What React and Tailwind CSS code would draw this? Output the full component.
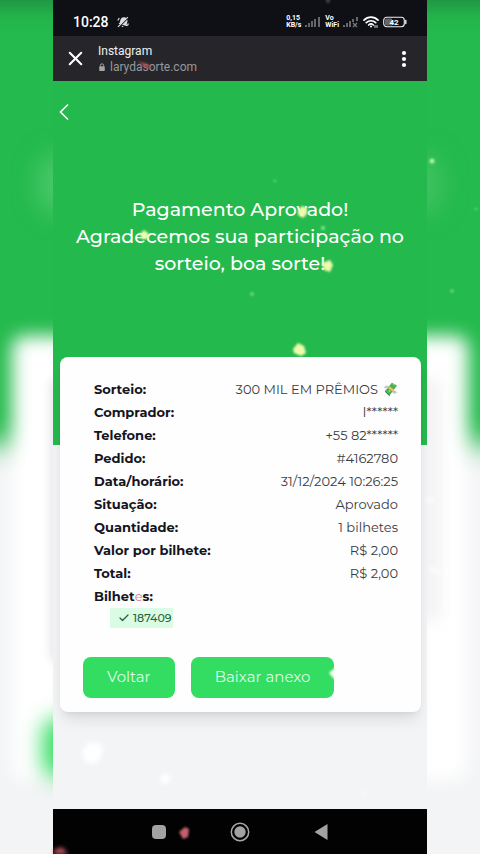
import { X, Check } from "lucide-react";

const details = [
  ["Comprador:", "l******"],
  ["Telefone:", "+55 82******"],
  ["Pedido:", "#4162780"],
  ["Data/horário:", "31/12/2024 10:26:25"],
  ["Situação:", "Aprovado"],
  ["Quantidade:", "1 bilhetes"],
  ["Valor por bilhete:", "R$ 2,00"],
  ["Total:", "R$ 2,00"],
];

function Muted() {
  return (
    <svg viewBox="0 0 12 12" className="size-3" aria-hidden="true">
      <path d="M6.5 1.2c2.700 0 4.500 2 3.900 4.400L9.700 8.300l.6 1.900L1.500 7.800l1.300-1.400.6-2.300C3.900 2.200 5 1.200 6.500 1.200z" fill="#dcdcde" />
      <path d="M4.200 9.500l2.600.7-1.500 1z" fill="#dcdcde" />
      <path d="M.8 4.500l1.500-2.500M11.400 7.500l-1 2.300" stroke="#dcdcde" strokeWidth="1.200" />
      <path d="M2 11L11.400 1.600" stroke="#0f0f16" strokeWidth="1.200" />
      <path d="M1 10.900L10.800 1.100" stroke="#dcdcde" strokeWidth="1.200" />
    </svg>
  );
}

function Signal({ off }) {
  return (
    <svg viewBox="0 0 16 12" className="h-3 w-4" fill="#66666b" aria-hidden="true">
      <rect x="0" y="9" width="2" height="2" />
      <rect x="3" y="7" width="2" height="4" />
      <rect x="6" y="5" width="2" height="6" />
      <rect x="9" y="3" width="2" height={off ? 3 : 8} />
      <rect x="13" y="1" width="2" height={off ? 4 : 10} />
      {off && <path d="M10 7l4 4M14 7l-4 4" stroke="#77777c" strokeWidth="1.3" />}
    </svg>
  );
}

function Wifi() {
  return (
    <svg viewBox="0 0 16 12" className="h-3 w-4" fill="none" stroke="#fff" strokeWidth="1.7" strokeLinecap="round" aria-hidden="true">
      <path d="M1 4.2C5 0.200 11 0.200 15 4.200M3.300 6.700c2.700-2.600 6.700-2.600 9.400 0M5.700 9c1.300-1.200 3.300-1.200 4.600 0" />
      <circle cx="8" cy="10.600" r="1" fill="#fff" stroke="none" />
      <path d="M12 9.500v2M14 9.500v2" strokeWidth="0.900" />
    </svg>
  );
}

function Battery() {
  return (
    <svg viewBox="0 0 24 12" className="h-3 w-6" aria-label="42%">
      <rect x="0.7" y="1.2" width="20.6" height="9.6" rx="3" fill="none" stroke="#ededed" strokeWidth="1.1" />
      <path d="M3.5 2.5H9v7H3.5A1.5 1.5 0 0 1 2 8V4a1.5 1.5 0 0 1 1.5-1.5z" fill="#67676b" />
      <path d="M22.8 4.5v3" stroke="#ededed" strokeWidth="1.4" strokeLinecap="round" />
      <text x="11" y="9" textAnchor="middle" fontSize="8" fontWeight="700" fill="#fff" className="font-[Roboto,sans-serif]">42</text>
    </svg>
  );
}

function FlyingMoney() {
  return (
    <svg viewBox="0 0 16 16" className="size-[15px]" aria-label="dinheiro">
      <path d="M0.500 6L3 3.600l3.500.6L5 7 2.500 6.600zM2 8l3-.2-.5 2.200-2 .2z" fill="#c6ccd2" />
      <path d="M10 9l3 .4 2.800 2-2.900-.3.800 2-3.500-1.700z" fill="#b9c1c8" />
      <path d="M9.400 0.800l5.600 3-7.400 9.800-4.900-4.400z" fill="#4fae54" />
      <path d="M2.700 9.200l4.900 4.400-.7 1.500-4.900-4.600z" fill="#2f8a43" />
      <path d="M6.900 4.400l5 3.800-1.500 2L5.300 6.600z" fill="#f0c34a" />
      <path d="M10.300 2.300l2.600 1.400" stroke="#9bdc92" strokeWidth="0.9" />
      <circle cx="7" cy="9.600" r="1" fill="#9bdc92" />
    </svg>
  );
}

function Backdrop() {
  return (
    <div className="absolute inset-0 -z-10 overflow-hidden bg-[#f3f4f6]" aria-hidden="true">
      <div className="absolute -inset-x-10 -top-10 h-[484px] bg-[#24ba4d] blur-[14px]" />
      <div className="absolute -inset-x-10 -top-6 h-7 bg-[#20823f] blur-md" />
      <div className="absolute top-[154px] left-[38px] h-[60px] w-10 rounded-full bg-[#4ac86a] blur-md" />
      <div className="absolute top-[154px] right-[38px] h-[60px] w-10 rounded-full bg-[#40c262] blur-md" />
      <div className="absolute inset-x-[12px] top-[336px] h-[444px] rounded-xl bg-white blur-[9px]" />
      <div className="absolute top-[380px] right-[41px] h-[240px] w-4 bg-[#f0eff1] blur-[8px]" />
      <div className="absolute top-[380px] left-[50px] h-[280px] w-2 bg-[#e6e6e9] blur-[4px]" />
      <div className="absolute top-[718px] left-[43px] h-[60px] w-12 rounded-2xl bg-[#30dd60] blur-[11px]" />
    </div>
  );
}

function Confetti() {
  return (
    <svg className="pointer-events-none absolute top-0 left-1/2 h-[854px] w-[480px] -translate-x-1/2" viewBox="0 0 480 854" aria-hidden="true">
      <defs>
        <filter id="soft" x="-50%" y="-50%" width="200%" height="200%">
          <feGaussianBlur stdDeviation="0.8" />
        </filter>
        <filter id="softer" x="-50%" y="-50%" width="200%" height="200%">
          <feGaussianBlur stdDeviation="2" />
        </filter>
      </defs>
      <g filter="url(#soft)" fill="#ecfbaa">
        <path d="M298 210l4-4 5 2 0 6-4 4-5-3z" />
        <path d="M140 234l4-4 5 4-1 5-6 0z" />
        <path d="M322 263l8-3 3 5-3 7-6-2z" />
        <path d="M293 349l5-6 6 3 2 7-5 3-7-3z" />
        <circle cx="323" cy="228" r="2" fill="#83e795" />
        <circle cx="275" cy="181" r="1.4" fill="#5bd078" />
        <circle cx="252" cy="294" r="1.7" fill="#7be391" />
        <circle cx="432" cy="161" r="2.5" fill="#b5f59f" />
        <circle cx="476" cy="209" r="1.5" fill="#59d276" />
        <circle cx="452" cy="291" r="1.7" fill="#70dc89" />
        <path d="M329 673l7-6v14z" fill="#fbfff0" />
        <path d="M138 62l7 1 8 4-7 1z" fill="#a94a52" />
        <path d="M179 832l6-5 4 2-1 8-5 2z" fill="#c3616b" />
        <circle cx="328" cy="1" r="2" fill="#48484d" />
      </g>
      <g filter="url(#softer)" fill="#fff">
        <path d="M82 751l8-9 11 2 2 10-8 10-10-2z" />
        <circle cx="165" cy="779" r="5" />
        <circle cx="364" cy="794" r="2" />
        <path d="M426 499l8-1v4l-8 0z" />
        <path d="M429 567l11 4-2 3-9-4z" />
        <path d="M54 850l8-3 6 7H54z" fill="#b8505b" />
      </g>
    </svg>
  );
}

export default function App() {
  return (
    <div className="relative isolate min-h-screen px-[53px] font-[Montserrat,Inter,sans-serif]">
      <Backdrop />
      <div className="flex min-h-screen flex-col bg-[#f3f4f6]">
        <div className="flex h-9 items-center justify-between bg-[#0f0f16] px-5 pt-2 font-[Roboto,sans-serif] text-white">
          <div className="flex items-center gap-2">
            <span className="text-sm leading-4 font-medium">10:28</span>
            <Muted />
          </div>
          <div className="flex items-center gap-1 text-[7px] leading-none font-bold">
            <div className="flex flex-col">
              <span className="h-[7px]">0,15</span>
              <span className="h-[7px]">KB/s</span>
            </div>
            <Signal />
            <div className="flex flex-col">
              <span className="h-[7px]">Vo</span>
              <span className="h-[7px]">WiFi</span>
            </div>
            <Signal off />
            <Wifi />
            <Battery />
          </div>
        </div>

        <header className="flex h-[45px] items-center bg-[#26262a] pr-[15px] pl-[11px] font-[Roboto,sans-serif] text-white">
          <button type="button" aria-label="Fechar" className="mr-[11px]">
            <X className="size-[23px]" strokeWidth={2.2} />
          </button>
          <div className="flex-1">
            <div className="text-xs leading-4 text-[#f0f0f0]">Instagram</div>
            <div className="flex items-center gap-1 text-xs leading-4 text-[#98989b]">
              <svg viewBox="0 0 8 10" className="h-2 w-2" aria-hidden="true">
                <rect x="0.5" y="4" width="7" height="6" rx="1" fill="#a5a5a8" />
                <path d="M2 4.5V3a2 2 0 0 1 4 0v1.5" fill="none" stroke="#a5a5a8" strokeWidth="1.2" />
              </svg>
              larydasorte.com
            </div>
          </div>
          <button type="button" aria-label="Mais opções">
            <svg viewBox="0 0 16 18" className="h-[18px] w-4" fill="#fff" aria-hidden="true">
              <circle cx="8" cy="3" r="2.1" />
              <circle cx="8" cy="9" r="2.1" />
              <circle cx="8" cy="15" r="2.1" />
            </svg>
          </button>
        </header>

        <main className="flex-1">
          <section className="h-[364px] bg-[#24b94d] px-4 pt-5">
            <button type="button" aria-label="Voltar à página anterior" className="-ml-3 block text-white">
              <svg viewBox="0 0 16 22" className="h-[22px] w-4" fill="none" stroke="currentColor" strokeWidth="1.6" aria-hidden="true">
                <path d="M11 3.500L3.500 11l7.500 7.500" />
              </svg>
            </button>
            <h1 className="pt-[73px] text-center text-[19px] leading-[27px] font-medium text-white">
              Pagamento Aprovado!<br />Agradecemos sua participação no sorteio, boa sorte!
            </h1>
          </section>

          <section className="mr-[6px] ml-[7px] -mt-[88px] rounded-lg bg-[#fefefe] pt-[21px] pb-[14px] shadow-lg">
            <dl className="pr-[23px] pl-[34px] text-[13px] leading-[23px] text-[#15151f]">
              <div className="flex justify-between">
                <dt className="font-bold">Sorteio:</dt>
                <dd className="flex items-center gap-[5px] text-[#3a3a42]">300 MIL EM PRÊMIOS <FlyingMoney /></dd>
              </div>
              {details.map(([label, value]) => (
                <div key={label} className="flex justify-between">
                  <dt className="font-bold">{label}</dt>
                  <dd className="text-[#3a3a42]">{value}</dd>
                </div>
              ))}
              <div>
                <dt className="font-bold">Bilhet<span className="font-normal text-[#dc7c8c]">e</span>s:</dt>
                <dd className="ml-4 flex h-5 w-[63px] items-center gap-[3px] bg-[#dafce5] pl-2 text-[11px] font-medium text-[#24633a]">
                  <Check className="size-3 shrink-0" strokeWidth={2.5} />
                  187409
                </dd>
              </div>
            </dl>
            <div className="mt-[29px] flex gap-4 pl-[23px] text-[15px] text-[#dcfce7]">
              <button type="button" className="h-[41px] rounded-lg bg-[#32dd61] px-6">Voltar</button>
              <button type="button" className="h-[41px] rounded-lg bg-[#32dd61] px-6">Baixar anexo</button>
            </div>
          </section>
        </main>

        <nav className="flex h-[45px] items-center justify-center gap-16 bg-[#020203]" aria-label="Sistema">
          <button type="button" aria-label="Recentes"><span className="block size-[14px] rounded-sm bg-[#a3a1a4]" /></button>
          <button type="button" aria-label="Início">
            <svg viewBox="0 0 20 20" className="size-5" aria-hidden="true">
              <circle cx="10" cy="10" r="8.7" fill="none" stroke="#a9a7a9" strokeWidth="1.5" />
              <circle cx="10" cy="10" r="5.7" fill="#a3a1a4" />
            </svg>
          </button>
          <button type="button" aria-label="Voltar">
            <svg viewBox="0 0 14 16" className="h-4 w-[14px]" fill="#a3a1a4" aria-hidden="true"><path d="M13.5 0v16L0.5 8z" /></svg>
          </button>
        </nav>
      </div>
      <Confetti />
    </div>
  );
}
